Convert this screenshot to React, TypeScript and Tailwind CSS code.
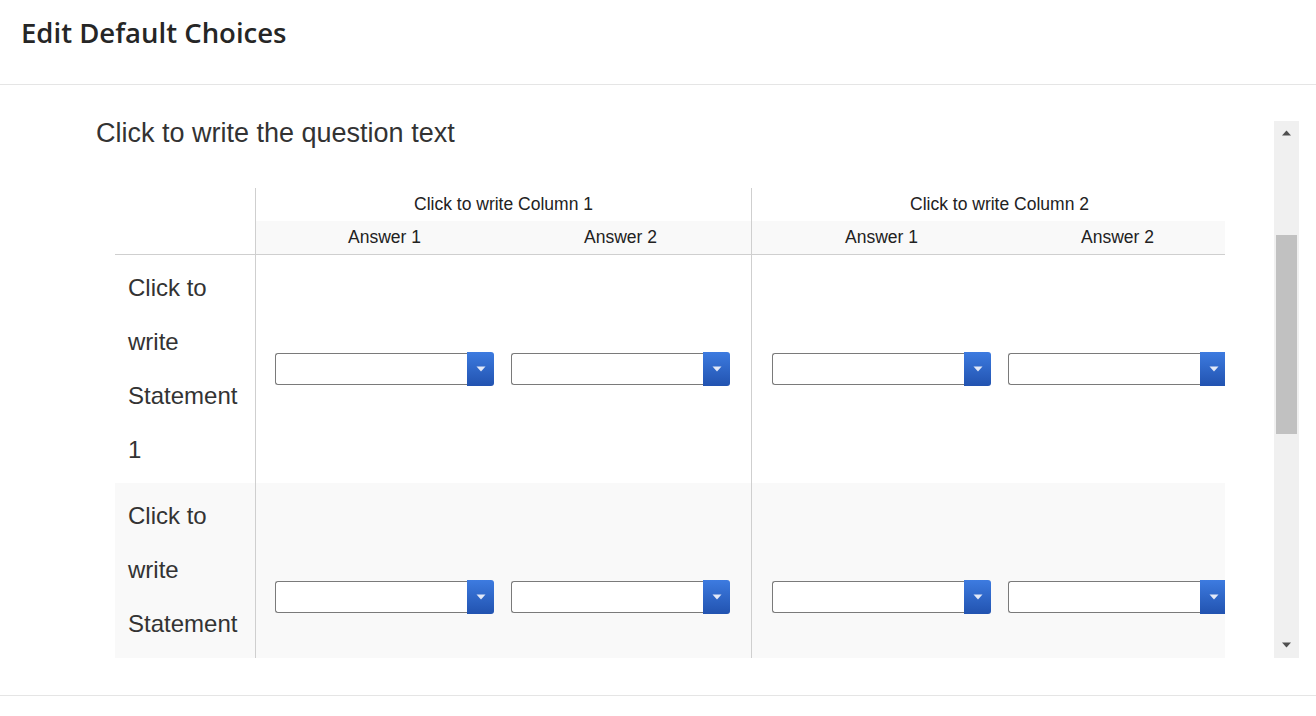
import React from 'react';

// ============================================
// Dropdown (select + blue arrow button)
// ============================================
const Dropdown: React.FC = () => (
  <div className="flex h-[34px] w-[219px] items-center">
    <div className="mb-[1px] h-[32px] w-[192px] rounded-l-[3px] border border-r-0 border-[#7a7a7a] bg-white" />
    <div className="flex h-[34px] w-[27px] items-center justify-center rounded-r-[3px] bg-gradient-to-b from-[#3d7be0] to-[#2253b0]">
      <svg width="10" height="6" viewBox="0 0 10 6">
        <path d="M0.5 0.5h9L5 5.5z" fill="#e3e9f7" />
      </svg>
    </div>
  </div>
);

const groups = [
  { title: 'Click to write Column 1', pl: 'pl-[19px]' },
  { title: 'Click to write Column 2', pl: 'pl-[20px]' },
];

const statements = ['Click to write Statement 1', 'Click to write Statement 2'];

// ============================================
// Scrollbar (drawn)
// ============================================
const FakeScrollbar: React.FC = () => (
  <div className="mt-[3px] flex w-[25px] shrink-0 flex-col bg-[#f0f0f0]">
    <div className="flex h-[24px] items-center justify-center">
      <svg width="9" height="6" viewBox="0 0 9 6">
        <path d="M0 5.5h9L4.5 0.5z" fill="#505050" />
      </svg>
    </div>
    <div className="mx-[2px] mt-[90px] h-[199px] bg-[#c1c1c1]" />
    <div className="flex-1" />
    <div className="flex h-[26px] items-center justify-center">
      <svg width="9" height="6" viewBox="0 0 9 6">
        <path d="M0 0.5h9L4.5 5.5z" fill="#505050" />
      </svg>
    </div>
  </div>
);

export default function App() {
  return (
    <div className="h-[716px] w-[1316px] bg-white" style={{ fontFamily: '"Liberation Sans", Arial, sans-serif' }}>
      {/* Header */}
      <div className="flex h-[85px] items-start border-b border-[#e5e5e5] pl-[21px] pt-[13px]">
        <h1 className="text-[27.5px] font-semibold leading-[40px] text-[#262626]" style={{ fontFamily: '"Open Sans", "Noto Sans", sans-serif' }}>
          Edit Default Choices
        </h1>
      </div>

      {/* Body */}
      <div className="border-b border-[#e5e5e5] pb-[37px] pt-[33px]">
        <div className="ml-[96px] mr-[17px] flex h-[540px]">
          <div className="flex-1 overflow-hidden">
            <div className="text-[27px] leading-[30px] text-[#333]">Click to write the question text</div>

            <div className="ml-[19px] mt-[40px] w-[1110px] overflow-hidden">
              {/* Column headers */}
              <div className="flex border-b border-[#cfcfcf]">
                <div className="w-[141px] shrink-0 border-r border-[#cfcfcf]" />
                {groups.map((g) => (
                  <div key={g.title} className="w-[496px] shrink-0 border-r border-[#cfcfcf]">
                    <div className="flex h-[33px] items-center justify-center text-[17.5px] text-[#222]">{g.title}</div>
                    <div className={`flex h-[33px] items-center gap-[17px] bg-[#f9f9f9] ${g.pl}`}>
                      <div className="w-[219px] text-center text-[17.5px] text-[#222]">Answer 1</div>
                      <div className="w-[219px] text-center text-[17.5px] text-[#222]">Answer 2</div>
                    </div>
                  </div>
                ))}
              </div>

              {/* Statement rows */}
              {statements.map((s, i) => (
                <div key={s} className={`flex ${i % 2 === 1 ? 'bg-[#f9f9f9]' : 'bg-white'}`}>
                  <div className="w-[141px] shrink-0 border-r border-[#cfcfcf] py-[6px] pl-[13px] pr-[12px] text-[24px] leading-[54px] text-[#333]">
                    {s}
                  </div>
                  {groups.map((g) => (
                    <div key={g.title} className={`flex w-[496px] shrink-0 items-center gap-[17px] border-r border-[#cfcfcf] ${g.pl}`}>
                      <Dropdown />
                      <Dropdown />
                    </div>
                  ))}
                </div>
              ))}
            </div>
          </div>
          <FakeScrollbar />
        </div>
      </div>
    </div>
  );
}
